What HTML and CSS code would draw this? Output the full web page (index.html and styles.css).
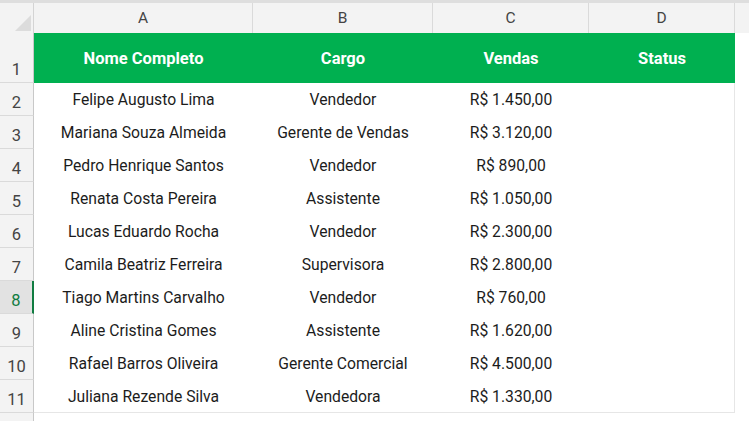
FILE: index.html
```html
<!DOCTYPE html>
<html lang="pt-br">
<head>
    <meta charset="UTF-8">
    <meta name="viewport" content="width=device-width, initial-scale=1.0">
    <title>Planilha de Vendas</title>
    <link rel="stylesheet" href="styles.css">
</head>
<body>
    <div class="topo"></div>
    <div class="planilha">
        <!-- cabeçalho das colunas -->
        <div class="canto">
            <svg class="selecionar-tudo" width="16" height="16" viewBox="0 0 16 16">
                <polygon points="16,0 16,16 0,16" fill="#dcdcdc"/>
            </svg>
        </div>
        <div class="col-letra">A</div>
        <div class="col-letra">B</div>
        <div class="col-letra">C</div>
        <div class="col-letra">D</div>
        <div class="col-letra col-resto"></div>

        <!-- linha 1 -->
        <div class="num">1</div>
        <div class="titulo">Nome Completo</div>
        <div class="titulo">Cargo</div>
        <div class="titulo">Vendas</div>
        <div class="titulo titulo-fim">Status</div>
        <div class="vazio"></div>

        <div class="num">2</div>
        <div class="cel">Felipe Augusto Lima</div>
        <div class="cel">Vendedor</div>
        <div class="cel">R$ 1.450,00</div>
        <div class="cel cel-fim"></div>
        <div class="vazio"></div>

        <div class="num">3</div>
        <div class="cel">Mariana Souza Almeida</div>
        <div class="cel">Gerente de Vendas</div>
        <div class="cel">R$ 3.120,00</div>
        <div class="cel cel-fim"></div>
        <div class="vazio"></div>

        <div class="num">4</div>
        <div class="cel">Pedro Henrique Santos</div>
        <div class="cel">Vendedor</div>
        <div class="cel">R$ 890,00</div>
        <div class="cel cel-fim"></div>
        <div class="vazio"></div>

        <div class="num">5</div>
        <div class="cel">Renata Costa Pereira</div>
        <div class="cel">Assistente</div>
        <div class="cel">R$ 1.050,00</div>
        <div class="cel cel-fim"></div>
        <div class="vazio"></div>

        <div class="num">6</div>
        <div class="cel">Lucas Eduardo Rocha</div>
        <div class="cel">Vendedor</div>
        <div class="cel">R$ 2.300,00</div>
        <div class="cel cel-fim"></div>
        <div class="vazio"></div>

        <div class="num">7</div>
        <div class="cel">Camila Beatriz Ferreira</div>
        <div class="cel">Supervisora</div>
        <div class="cel">R$ 2.800,00</div>
        <div class="cel cel-fim"></div>
        <div class="vazio"></div>

        <div class="num num-ativo">8</div>
        <div class="cel">Tiago Martins Carvalho</div>
        <div class="cel">Vendedor</div>
        <div class="cel">R$ 760,00</div>
        <div class="cel cel-fim"></div>
        <div class="vazio"></div>

        <div class="num">9</div>
        <div class="cel">Aline Cristina Gomes</div>
        <div class="cel">Assistente</div>
        <div class="cel">R$ 1.620,00</div>
        <div class="cel cel-fim"></div>
        <div class="vazio"></div>

        <div class="num">10</div>
        <div class="cel">Rafael Barros Oliveira</div>
        <div class="cel">Gerente Comercial</div>
        <div class="cel">R$ 4.500,00</div>
        <div class="cel cel-fim"></div>
        <div class="vazio"></div>

        <div class="num">11</div>
        <div class="cel ult">Juliana Rezende Silva</div>
        <div class="cel ult">Vendedora</div>
        <div class="cel ult">R$ 1.330,00</div>
        <div class="cel cel-fim ult"></div>
        <div class="vazio"></div>

        <div class="num num-corte"></div>
        <div class="vazio"></div>
        <div class="vazio"></div>
        <div class="vazio"></div>
        <div class="vazio"></div>
        <div class="vazio"></div>
    </div>
</body>
</html>
```

FILE: styles.css
```css
* {
    box-sizing: border-box;
}
body {
    margin: 0;
    font-family: Roboto, "Liberation Sans", sans-serif;
    background-color: #fff;
    overflow: hidden;
    height: 421px;
}
.topo {
    height: 3px;
    background-color: #dedede;
}
.planilha {
    display: grid;
    height: 418px;
    overflow: hidden;
    grid-template-columns: 34px 219px 180px 156px 146px 1fr;
    grid-template-rows: 30px 50px repeat(10, 33px) 1fr;
}
.canto {
    background-color: #f3f3f3;
    border-right: 1px solid #d4d4d4;
    display: flex;
    align-items: flex-end;
    justify-content: flex-end;
    padding: 0 2px 2px 0;
}
.col-letra {
    background-color: #f3f3f3;
    border-right: 1px solid #dadada;
    color: #444;
    font-size: 15.5px;
    display: flex;
    align-items: center;
    justify-content: center;
}
.col-resto {
    border-right: none;
}
.num {
    background-color: #f3f3f3;
    border-right: 1px solid #c8c8c8;
    border-bottom: 1px solid #dadada;
    color: #444;
    font-size: 16.5px;
    display: flex;
    align-items: flex-end;
    justify-content: center;
    padding-bottom: 3px;
}
.num-ativo {
    background-color: #e2e2e2;
    color: #107c41;
    border-right: 2px solid #107c41;
}
.num-corte {
    border-bottom: none;
}
.titulo {
    background-color: #00b050;
    color: #fff;
    font-weight: 700;
    font-size: 16.5px;
    display: flex;
    align-items: center;
    justify-content: center;
}
.cel {
    color: #1c1c1c;
    font-size: 15.7px;
    display: flex;
    align-items: center;
    justify-content: center;
}
.cel-fim {
    border-right: 1px solid #e6e6e6;
}
.ult {
    border-bottom: 1px solid #e6e6e6;
}
.vazio {
    background-color: #fff;
}
```
